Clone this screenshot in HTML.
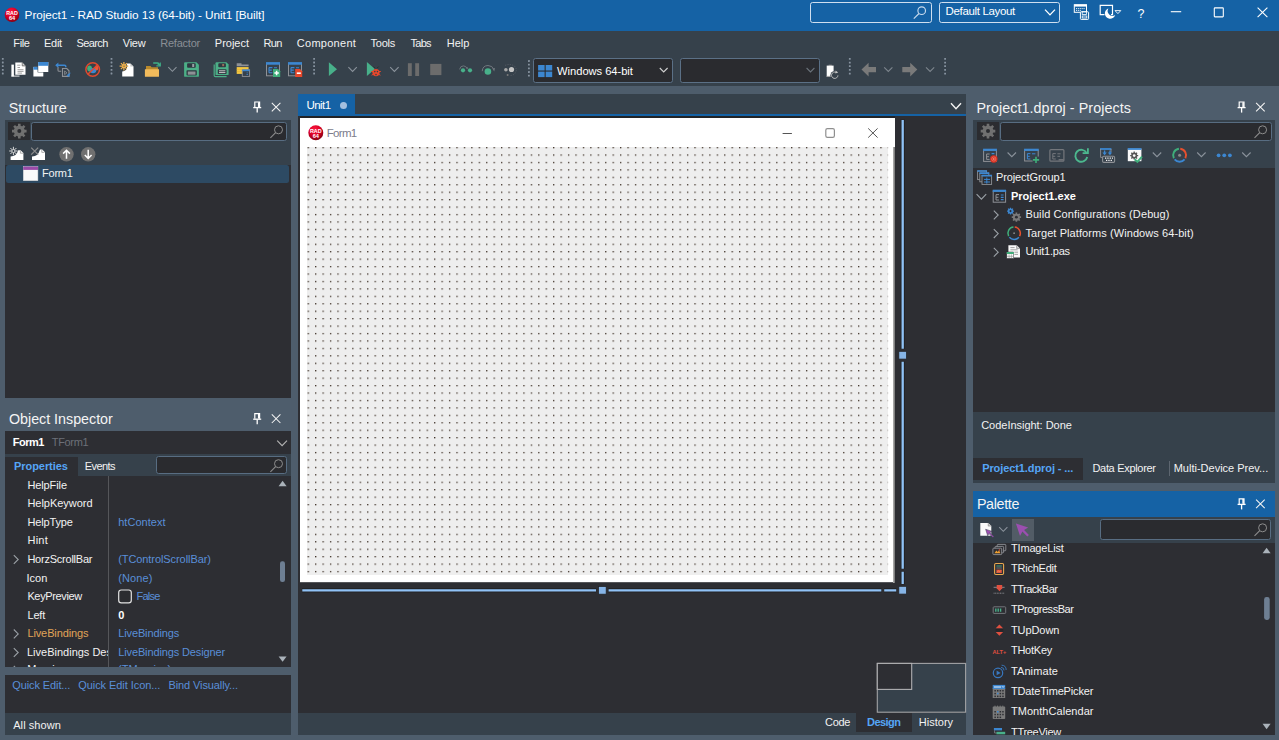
<!DOCTYPE html>
<html><head><meta charset="utf-8"><title>RAD Studio</title>
<style>
*{box-sizing:border-box;margin:0;padding:0}
html{background:#4e5d6c}html,body{width:1279px;height:740px;overflow:hidden;background:#4e5d6c;font-family:"Liberation Sans",sans-serif;font-size:11px;color:#f0f0f0}
.a{position:absolute}
.t{position:absolute;white-space:nowrap;line-height:1;font-size:11px;color:#f2f2f2}
.b{font-weight:bold}
.dk{background:#2d2e33}
.tb{background:#36414b}
.hd{font-size:14.3px;color:#f4f4f4}
.blue{color:#5a8fd8}
.sb{position:absolute;border:1px solid #586d82;border-radius:2.6px;background:#2a2b2f}
svg{position:absolute;overflow:visible}
</style></head><body>
<!-- BASES -->
<div class="a tb" style="left:0;top:0;width:1279px;height:86px"></div>
<div class="a dk" style="left:298.4px;top:94px;width:667.4px;height:640.5px"></div>
<div class="a tb" style="left:973.3px;top:490.8px;width:301.5px;height:243.7px"></div>
<!-- TITLE BAR -->
<div class="a" id="title" style="left:0;top:0;width:1279px;height:30.7px;background:#1562a5"></div>
<div class="t" style="left:24.6px;top:9.5px;font-size:11.8px;color:#fff;letter-spacing:-0.068px">Project1 - RAD Studio 13 (64-bit) - Unit1 [Built]</div>
<div class="a" style="left:810.3px;top:1.9px;width:121.6px;height:21px;border:1.7px solid #cfdff0;border-radius:2.6px"></div>
<div class="a" style="left:938.9px;top:1.9px;width:121px;height:21px;border:1.7px solid #cfdff0;border-radius:2.6px"></div>
<div class="t" style="left:945.6px;top:5.8px;font-size:11.5px;color:#fff;letter-spacing:-0.343px">Default Layout</div>
<svg id="titleicons" style="left:0;top:0" width="1279" height="31" viewBox="0 0 1279 31">
<defs><radialGradient id="rg" cx="0.42" cy="0.3" r="0.75"><stop offset="0" stop-color="#ff1840"/><stop offset="0.5" stop-color="#dc0026"/><stop offset="1" stop-color="#7a0010"/></radialGradient></defs>
<circle cx="12" cy="14.8" r="7.3" fill="url(#rg)"/>
<text x="12" y="14.6" font-family="Liberation Sans" font-weight="bold" font-size="6" fill="#fff" text-anchor="middle" textLength="11.4" lengthAdjust="spacingAndGlyphs">RAD</text>
<text x="12" y="20" font-family="Liberation Sans" font-weight="bold" font-size="5.6" fill="#fff" text-anchor="middle">64</text>
<!-- search magnifier -->
<g fill="none" stroke="#c9dbee" stroke-width="1.15"><circle cx="921.7" cy="10.7" r="3.8"/><path d="M919 13.5L913.8 18.6"/></g>
<!-- combo chevron -->
<path d="M1045 9.6L1050 14.9L1055 9.6" fill="none" stroke="#fff" stroke-width="1.3"/>
<!-- save layout -->
<g fill="none" stroke="#fff" stroke-width="1">
<rect x="1074.3" y="4.7" width="12.2" height="7.6" fill="#1562a5"/>
<path d="M1074.3 5.6H1086.5" stroke-width="2"/>
<path d="M1076 8.6H1085M1076 10.4H1081" stroke-dasharray="1.2 0.9" stroke-width="0.9"/>
<rect x="1080.4" y="11.8" width="8.2" height="7.6" rx="0.8" fill="#1562a5"/>
<rect x="1082.2" y="11.8" width="4.4" height="2.6" stroke-width="0.8"/>
<rect x="1082.2" y="16" width="4.6" height="2" stroke-width="0.8"/>
</g>
<!-- dark mode -->
<g fill="none" stroke="#fff" stroke-width="1.2">
<path d="M1104.5 14.6H1100.2V5.3H1112.5V14.6H1111"/>
<path d="M1108.37 8.43A5.3 5.3 0 1 0 1115.24 15.02A4.9 4.9 0 0 1 1108.37 8.43Z" fill="#fff" stroke="none"/>
<path d="M1115 10.6H1120.8L1117.9 13.6Z" stroke-width="0.9"/>
</g>
<text x="1141" y="17.6" font-family="Liberation Sans" font-size="12.5" fill="#fff" text-anchor="middle">?</text>
<!-- window controls -->
<g fill="none" stroke="#fff" stroke-width="1.1">
<path d="M1170.8 11.7H1181.2"/>
<rect x="1214.3" y="7.9" width="9" height="9" rx="0.6"/>
<path d="M1257.6 7.6L1267.4 17.2M1267.4 7.6L1257.6 17.2"/>
</g>
</svg>
<!-- MENU + TOOLBAR -->
<div id="menu">
<div class="t" style="left:13.3px;top:38.2px;letter-spacing:-0.369px">File</div>
<div class="t" style="left:43.9px;top:38.2px;letter-spacing:-0.233px">Edit</div>
<div class="t" style="left:76.6px;top:38.2px;letter-spacing:-0.627px">Search</div>
<div class="t" style="left:122.7px;top:38.2px;letter-spacing:-0.2px">View</div>
<div class="t" style="left:160.2px;top:38.2px;color:#8a8f96;letter-spacing:-0.216px">Refactor</div>
<div class="t" style="left:214.8px;top:38.2px">Project</div>
<div class="t" style="left:263.6px;top:38.2px;letter-spacing:-0.681px">Run</div>
<div class="t" style="left:296.8px;top:38.2px;letter-spacing:0.273px">Component</div>
<div class="t" style="left:370.6px;top:38.2px;letter-spacing:-0.245px">Tools</div>
<div class="t" style="left:410.5px;top:38.2px;letter-spacing:-0.712px">Tabs</div>
<div class="t" style="left:446.7px;top:38.2px">Help</div>
</div>
<div class="sb" style="left:533.1px;top:58.4px;width:139.7px;height:24.3px;border-width:1.3px;border-color:#5b7086"></div>
<div class="t" style="left:557.1px;top:65.5px;font-size:11.2px;color:#fff;letter-spacing:-0.051px">Windows 64-bit</div>
<div class="sb" style="left:680.2px;top:58.4px;width:139.7px;height:24.3px;border-width:1.3px;border-color:#5b7086"></div>

<svg id="tbicons" style="left:0;top:54px" width="1279" height="34" viewBox="0 54 1279 34">
<g fill="#8793a0"><rect x="1.9" y="57.9" width="1.8" height="1.8" rx="0.3"/><rect x="1.9" y="61.6" width="1.8" height="1.8" rx="0.3"/><rect x="1.9" y="65.2" width="1.8" height="1.8" rx="0.3"/><rect x="1.9" y="68.9" width="1.8" height="1.8" rx="0.3"/><rect x="1.9" y="72.6" width="1.8" height="1.8" rx="0.3"/><rect x="110.6" y="57.9" width="1.8" height="1.8" rx="0.3"/><rect x="110.6" y="61.6" width="1.8" height="1.8" rx="0.3"/><rect x="110.6" y="65.2" width="1.8" height="1.8" rx="0.3"/><rect x="110.6" y="68.9" width="1.8" height="1.8" rx="0.3"/><rect x="110.6" y="72.6" width="1.8" height="1.8" rx="0.3"/><rect x="313.2" y="57.9" width="1.8" height="1.8" rx="0.3"/><rect x="313.2" y="61.6" width="1.8" height="1.8" rx="0.3"/><rect x="313.2" y="65.2" width="1.8" height="1.8" rx="0.3"/><rect x="313.2" y="68.9" width="1.8" height="1.8" rx="0.3"/><rect x="313.2" y="72.6" width="1.8" height="1.8" rx="0.3"/><rect x="528.0" y="60.1" width="1.8" height="1.8" rx="0.3"/><rect x="528.0" y="63.8" width="1.8" height="1.8" rx="0.3"/><rect x="528.0" y="67.4" width="1.8" height="1.8" rx="0.3"/><rect x="528.0" y="71.1" width="1.8" height="1.8" rx="0.3"/><rect x="528.0" y="74.8" width="1.8" height="1.8" rx="0.3"/><rect x="848.9" y="58.0" width="1.8" height="1.8" rx="0.3"/><rect x="848.9" y="61.7" width="1.8" height="1.8" rx="0.3"/><rect x="848.9" y="65.3" width="1.8" height="1.8" rx="0.3"/><rect x="848.9" y="69.0" width="1.8" height="1.8" rx="0.3"/><rect x="848.9" y="72.7" width="1.8" height="1.8" rx="0.3"/><rect x="944.2" y="58.0" width="1.8" height="1.8" rx="0.3"/><rect x="944.2" y="61.7" width="1.8" height="1.8" rx="0.3"/><rect x="944.2" y="65.3" width="1.8" height="1.8" rx="0.3"/><rect x="944.2" y="69.0" width="1.8" height="1.8" rx="0.3"/><rect x="944.2" y="72.7" width="1.8" height="1.8" rx="0.3"/></g>
<!-- 1 view unit -->
<path d="M11.4 64.6H13.9V76.4H11.4Z" fill="#fff"/><path d="M11.4 76.1H19.5" stroke="#fff" stroke-width="0.9"/>
<path d="M15.3 62.6H22.2L25.5 65.9V74.8H15.3Z" fill="#fff"/><path d="M22.2 62.6V65.9H25.5" fill="#d0d0d0" stroke="#555" stroke-width="0.7"/>
<path d="M17.2 65.2H20.4M17.5 67.5H20M17.5 69.7H23.5M17.5 71.4H23.5M17.5 73.1H22" stroke="#8a8a8a" stroke-width="0.8"/>
<!-- 2 view form -->
<rect x="33.4" y="66.9" width="9.9" height="9.6" fill="#fff"/><rect x="33.4" y="66.9" width="4.6" height="2.8" fill="#3c87d1"/>
<rect x="37.6" y="61.6" width="11.1" height="10.8" fill="#36414b"/>
<rect x="38.2" y="62" width="10.1" height="10" fill="#fff"/><rect x="38.2" y="62" width="10.1" height="3.8" fill="#3c87d1"/>
<!-- 3 toggle -->
<g fill="none" stroke="#3c87d1" stroke-width="1.5"><path d="M56.2 65.2H64.5Q65.8 65.2 65.8 66.6V67.2"/></g>
<path d="M55.2 65.2L58.4 62.4V68Z" fill="#3c87d1"/>
<g fill="none" stroke="#8e9196" stroke-width="1.1"><path d="M58 67.3V70.2Q58 71.3 59.2 71.3H61.2"/><path d="M62.5 68.5H66.8L69 70.8V76.4H62.5Z"/><path d="M64.6 71L67 72.8L64.6 74.6Z" stroke-width="0.8"/></g>
<path d="M70.6 72.6L66.4 75.2L69 77Z" fill="#3c87d1"/>
<!-- 4 no-entry -->
<ellipse cx="89.6" cy="68.5" rx="2.4" ry="3" fill="#3fae7a"/><ellipse cx="93" cy="70.6" rx="3.2" ry="2.6" fill="#3c87d1"/><ellipse cx="96.6" cy="68" rx="1.8" ry="2.4" fill="#e8583a"/>
<g fill="none" stroke="#e04a2f" stroke-width="1.5"><circle cx="92.7" cy="69.5" r="6.8"/><path d="M97.6 64.7L87.8 74.3"/></g>
<!-- 5 new -->
<path d="M126.6 63.4H130.3L133.5 66.6V76.4H122.2V71.5Q126.8 71 127.4 66Z" fill="#fff"/>
<path d="M130.3 63.4V66.6H133.5" fill="#c8c8c8"/>
<g stroke="#f0b350" stroke-width="1.2"><path d="M123.9 61.9V70.5M119.6 66.2H128.2M120.9 63.2L126.9 69.2M126.9 63.2L120.9 69.2"/></g><circle cx="123.9" cy="66.2" r="2" fill="#f0b350"/><path d="M122.8 66.2H125" stroke="#8a6a30" stroke-width="0.8"/>
<!-- 6 open -->
<path d="M146 66H150.5L151.6 67.2H158V70H146Z" fill="#b8892c"/>
<path d="M144.9 69.2H159V76.2Q159 76.8 158.4 76.8H145.5Q144.9 76.8 144.9 76.2Z" fill="#f2bb5c"/>
<g fill="none" stroke="#3fae87" stroke-width="1.4"><path d="M153.2 63H157.6Q159 63 159 64.6"/></g><path d="M156.5 63.8H160.4V66.2Z" fill="#3fae87"/><path d="M156.4 65.9L160.3 65.9L160.3 62.5" fill="none" stroke="#3fae87" stroke-width="1.1"/>
<path d="M168.3 67.2L172.4 71.3L176.5 67.2" fill="none" stroke="#8a929b" stroke-width="1.1"/>
<!-- 7 save -->
<g id="floppy"><path d="M185 62.3H196.4L198.9 64.8V75.9Q198.9 76.8 198 76.8H185Q184.1 76.8 184.1 75.9V63.2Q184.1 62.3 185 62.3Z" fill="#4caf87"/>
<rect x="187.1" y="63.3" width="8.6" height="4.4" rx="0.8" fill="#2f3841"/><rect x="192.2" y="64" width="2" height="3" fill="#9aa0a6"/>
<rect x="186.5" y="70.3" width="10.3" height="5.2" rx="0.8" fill="#2f3841"/><rect x="187.8" y="71.5" width="7.7" height="3.2" fill="#8e9196"/></g>
<!-- 8 save all -->
<path d="M214.2 64.6V75.4Q214.2 76.6 215.4 76.6H226.6" fill="none" stroke="#4caf87" stroke-width="1.2"/>
<path d="M216.4 62.3H226.4L228.6 64.5V74.2Q228.6 75.1 227.7 75.1H216.4Q215.5 75.1 215.5 74.2V63.2Q215.5 62.3 216.4 62.3Z" fill="#4caf87"/>
<rect x="218.3" y="63.2" width="7.6" height="4" rx="0.8" fill="#2f3841"/><rect x="222.2" y="64" width="1.9" height="2.2" fill="#9a6a5a"/>
<rect x="217.8" y="69.3" width="8.8" height="4.8" rx="0.8" fill="#2f3841"/><path d="M219 70.8H225.4M219 72.6H225.4" stroke="#c8c8c8" stroke-width="1"/>
<!-- 9 open project -->
<path d="M236.7 63.2H241.5V64.6H248.6V66.3H236.7Z" fill="#8e9196"/>
<rect x="236.7" y="67.1" width="11.9" height="6.8" fill="#f4c842"/><path d="M236.7 69.4H248.6M236.7 71.6H243" stroke="#d8a830" stroke-width="0.5"/>
<rect x="242.3" y="69.8" width="7.3" height="6.6" fill="#36414b" stroke="#8e9196" stroke-width="0.9"/><path d="M242.3 70.4H249.6" stroke="#3c87d1" stroke-width="1.6"/><path d="M247.2 72.4V75" stroke="#3c87d1" stroke-width="1.2" stroke-dasharray="0.9 0.8"/>
<!-- 10 add file / 11 remove file -->
<g id="winE"><rect x="266.5" y="63.6" width="13" height="12.2" fill="none" stroke="#8e9196" stroke-width="1"/><path d="M266 63.4H280" stroke="#3c87d1" stroke-width="2.6"/>
<path d="M269 67.6H272.4M269 70.1H271.8M269 72.8H272.4M269 67.6V72.8M274 67.8H277M274 70.4H276" stroke="#3c87d1" stroke-width="1.1" fill="none"/></g>
<path d="M273 69H278L280.2 71.2V77H273Z" fill="#3fae7a"/><path d="M276.6 70.8V75.2M274.4 73H278.8" stroke="#fff" stroke-width="1.5"/>
<use href="#winE" x="22"/>
<path d="M295.2 69H300L302.2 71.2V77H295.2Z" fill="#e8482b"/><path d="M296.8 73.2H300.8" stroke="#fff" stroke-width="1.6"/>
<!-- run -->
<path d="M328.9 62.3L337 69.2L328.9 76Z" fill="#48b08a"/>
<path d="M348.4 67.2L352.6 71.4L356.8 67.2" fill="none" stroke="#8a929b" stroke-width="1.1"/>
<path d="M366.9 62L374.9 69L366.9 76Z" fill="#48b08a"/>
<path d="M373.6 66.8L375 68.2M378.6 66.6L377.2 68" stroke="#2a2a2a" stroke-width="0.9"/>
<circle cx="376" cy="72.6" r="3.6" fill="#e8482b"/><path d="M371.2 71.5H373M379 71.5H380.8M371.6 75.2L373 74.4M380.4 75.2L379 74.4" stroke="#e8482b" stroke-width="1"/><circle cx="374.8" cy="71.6" r="0.8" fill="#36414b"/><circle cx="377.4" cy="71.6" r="0.8" fill="#36414b"/><circle cx="376" cy="74.6" r="0.8" fill="#36414b"/>
<path d="M390.2 67.2L394.4 71.4L398.6 67.2" fill="none" stroke="#8a929b" stroke-width="1.1"/>
<rect x="407.9" y="63.2" width="3.9" height="12.8" fill="#6c6c6c"/><rect x="415.2" y="63.2" width="3.9" height="12.8" fill="#6c6c6c"/>
<rect x="430.2" y="63.9" width="11.2" height="11.2" fill="#6c6c6c"/>
<!-- step over -->
<circle cx="463" cy="70.3" r="2.1" fill="#48b08a"/><circle cx="470" cy="70.3" r="2.1" fill="#48b08a"/>
<path d="M459.6 69.4Q460.2 65.9 463.4 65.9Q466.2 65.9 467 68.6" fill="none" stroke="#70787f" stroke-width="0.9"/><path d="M465.8 67.6L467.4 69.6L468 67.2Z" fill="#70787f"/>
<!-- trace into -->
<circle cx="487.9" cy="71.5" r="3.3" fill="#48b08a"/>
<path d="M482.2 71.2Q482.6 65.6 488 65.5Q492.6 65.6 493.8 69.6" fill="none" stroke="#70787f" stroke-width="1"/><path d="M492.4 68.4L494.2 71.4L495 68Z" fill="#70787f"/>
<!-- run until return -->
<circle cx="505.9" cy="69.8" r="1.8" fill="#a8a8a8"/><circle cx="511.5" cy="69.5" r="2.6" fill="#c4c4c4"/><circle cx="507.6" cy="75.1" r="1" fill="#7a7a7a"/>
<path d="M505 65.4Q510.5 63.2 514.6 66.2Q517.6 69.4 515.2 73.2Q513 75.8 509.4 75.4" fill="none" stroke="#5a6068" stroke-width="0.8" stroke-dasharray="1.2 1.2"/>
<!-- windows logo -->
<g fill="#3c87d1"><rect x="538.1" y="65" width="6.5" height="5.5"/><rect x="545.7" y="65" width="6.5" height="5.5"/><rect x="538.1" y="71.6" width="6.5" height="5.5"/><rect x="545.7" y="71.6" width="6.5" height="5.5"/></g>
<path d="M659.8 68L663.7 72L667.6 68" fill="none" stroke="#d0d0d0" stroke-width="1.1"/>
<path d="M806.6 68L810.5 72L814.4 68" fill="none" stroke="#6a727a" stroke-width="1.1"/>
<!-- device refresh -->
<path d="M826.7 65.6H833.6V76.8H826.7Z" fill="#fdfdfd"/><path d="M828.6 64.8H831.8V65.8H828.6Z" fill="#b0b0b0"/><path d="M826.7 76.4H833.6" stroke="#9a9a9a" stroke-width="0.9"/>
<circle cx="834.7" cy="75.2" r="4.3" fill="#36414b"/><path d="M837.9 75.4A3.2 3.2 0 1 1 836.2 72.4" fill="none" stroke="#c4c4c4" stroke-width="0.9"/><path d="M835.6 70.6L838.2 72.4L835.4 73.6Z" fill="#c4c4c4"/>
<!-- back / forward -->
<path d="M861.5 69.6L868.6 62.8V67H876V72.2H868.6V76.4Z" fill="#7a7a7a"/>
<path d="M884.2 67.4L888.3 71.5L892.4 67.4" fill="none" stroke="#7d858d" stroke-width="1.1"/>
<path d="M917.3 69.6L910.2 62.8V67H902.3V72.2H910.2V76.4Z" fill="#7a7a7a"/>
<path d="M926 67.4L930.1 71.5L934.2 67.4" fill="none" stroke="#7d858d" stroke-width="1.1"/>
</svg>
<!-- STRUCTURE PANEL -->
<div class="t hd" style="left:8.7px;top:100.6px">Structure</div>
<div class="a tb" style="left:5px;top:120px;width:286px;height:45px"></div>
<div class="a dk" style="left:5px;top:164.5px;width:286px;height:233px"></div>
<div class="a" style="left:8.1px;top:122px;width:22.4px;height:18.1px;background:#2b2c30"></div>
<div class="sb" style="left:31.3px;top:121.7px;width:255.6px;height:19px;border-width:1.5px"></div>
<div class="a" style="left:6.3px;top:164.6px;width:282.7px;height:18.2px;background:#2d4a63;border-radius:2.5px"></div>
<div class="t" style="left:42.1px;top:168.3px;letter-spacing:-0.241px">Form1</div>

<svg id="symdefs" style="left:0;top:0" width="0" height="0"><defs>
<g id="pin"><path d="M-2.4 5.6V0.4H2.4V5.6" fill="none" stroke="#fff" stroke-width="1.2"/><path d="M1.5 0.6V5.4" stroke="#fff" stroke-width="1.5"/><path d="M-4 6H4" stroke="#fff" stroke-width="1.3"/><path d="M0 6.4V11" stroke="#fff" stroke-width="1.3"/></g>
<g id="cls"><path d="M-4.3 -4.3L4.3 4.3M4.3 -4.3L-4.3 4.3" stroke="#f4f4f4" stroke-width="1.05" fill="none"/></g>
<g id="mag"><circle cx="0" cy="0" r="4" fill="none" stroke="#8d8d8d" stroke-width="1"/><path d="M-2.9 2.9L-8.1 8.1" stroke="#8d8d8d" stroke-width="1.1"/></g>
<g id="gear"><circle cx="0" cy="0" r="4" fill="none" stroke="#707070" stroke-width="3"/><path d="M0 -7.3V7.3M-7.3 0H7.3M-5.2 -5.2L5.2 5.2M5.2 -5.2L-5.2 5.2" stroke="#707070" stroke-width="2.6"/><circle cx="0" cy="0" r="2" fill="#2b2c30"/></g>
<g id="chr"><path d="M-2.2 -4.4L2.2 0L-2.2 4.4" fill="none" stroke="#9aa0a6" stroke-width="1.1"/></g>
<g id="chd"><path d="M-4.4 -2.2L0 2.2L4.4 -2.2" fill="none" stroke="#9aa0a6" stroke-width="1.1"/></g>
</defs></svg>
<svg id="structicons" style="left:0;top:94px" width="296" height="100" viewBox="0 94 296 100">
<use href="#pin" x="257.2" y="101.6"/><use href="#cls" x="276.1" y="107.1"/>
<use href="#gear" x="19.3" y="131.1"/><use href="#mag" x="278.5" y="129.8"/>
<!-- new -->
<path d="M18.2 150.2H20.6L23.4 153V159.9H10.6V156.4Q16.4 156.4 18.2 150.2Z" fill="#fff"/><path d="M20.4 150.4V153.2H23.2" fill="none" stroke="#999" stroke-width="0.8"/>
<g stroke="#e8e8e8" stroke-width="0.9"><path d="M13.4 146.8V155.2M9.2 151H17.6M10.4 148L16.4 154M16.4 148L10.4 154"/></g><circle cx="13.4" cy="151" r="1.5" fill="#36414b" stroke="#e8e8e8" stroke-width="0.7"/>
<!-- delete -->
<path d="M40 149.4H42.2L45 152.2V159.9H32V156.4Q38 156.6 40 149.4Z" fill="#fff"/><path d="M41.8 149.8V152.4H44.6" fill="none" stroke="#999" stroke-width="0.8"/>
<path d="M31.2 147.6L38.2 154.6M38.2 147.6L31.2 154.6" stroke="#8a8a8a" stroke-width="1.3"/>
<!-- up/down -->
<circle cx="66.5" cy="154.3" r="7.2" fill="#707070"/><path d="M66.5 158.8V150.6M63.1 153.6L66.5 150.2L69.9 153.6" fill="none" stroke="#fff" stroke-width="1.5"/>
<circle cx="88.2" cy="154.3" r="7.2" fill="#707070"/><path d="M88.2 149.8V158M84.8 155L88.2 158.4L91.6 155" fill="none" stroke="#fff" stroke-width="1.5"/>
<!-- form icon -->
<rect x="23.3" y="166.7" width="14.6" height="14" fill="#fafafa" stroke="#d8d8d8" stroke-width="0.5"/><rect x="23.2" y="166.6" width="14.8" height="3.3" fill="#9a4aa8"/>
</svg>
<!-- OBJECT INSPECTOR -->
<div class="t hd" style="left:8.95px;top:412.2px;letter-spacing:-0.016px">Object Inspector</div>
<div class="a dk" style="left:5px;top:431.2px;width:286px;height:235.8px"></div>
<div class="a tb" style="left:5px;top:453.6px;width:286px;height:22.2px"></div>
<div class="a dk" style="left:5px;top:457.3px;width:73px;height:18.7px"></div>
<div class="t b" style="left:12.7px;top:436.8px;color:#fff;letter-spacing:-0.475px">Form1</div>
<div class="t" style="left:51.8px;top:436.8px;color:#6c7078;letter-spacing:-0.336px">TForm1</div>
<div class="t b" style="left:14.0px;top:461px;color:#55a5f6;letter-spacing:-0.055px">Properties</div>
<div class="t" style="left:84.7px;top:461px;letter-spacing:-0.546px">Events</div>
<div class="sb" style="left:156.2px;top:455.6px;width:130.8px;height:18.4px;border-width:1.3px"></div>
<div class="a" style="left:107.9px;top:475.8px;width:1.1px;height:191.5px;background:#55565a"></div>
<div id="props">
<div class="t" style="left:27.4px;top:479.5px;letter-spacing:-0.104px">HelpFile</div>
<div class="t" style="left:27.4px;top:498.2px;letter-spacing:-0.03px">HelpKeyword</div>
<div class="t" style="left:27.4px;top:516.8px;letter-spacing:-0.136px">HelpType</div>
<div class="t blue" style="left:118.2px;top:516.8px;letter-spacing:0.04px">htContext</div>
<div class="t" style="left:27.4px;top:535.4px;letter-spacing:0.298px">Hint</div>
<div class="t" style="left:27.4px;top:554px;letter-spacing:-0.232px">HorzScrollBar</div>
<div class="t blue" style="left:118.2px;top:554px;letter-spacing:-0.076px">(TControlScrollBar)</div>
<div class="t" style="left:26.4px;top:572.6px;letter-spacing:0.075px">Icon</div>
<div class="t blue" style="left:118.2px;top:572.6px;letter-spacing:0.128px">(None)</div>
<div class="t" style="left:27.4px;top:591.2px;letter-spacing:-0.359px">KeyPreview</div>
<div class="t blue" style="left:136.45px;top:591.2px;letter-spacing:-0.733px">False</div>
<div class="t" style="left:27.4px;top:609.8px;letter-spacing:-0.131px">Left</div>
<div class="t b" style="left:118.2px;top:609.8px;color:#fff">0</div>
<div class="t" style="left:27.4px;top:628.4px;color:#e0a458;letter-spacing:-0.111px">LiveBindings</div>
<div class="t blue" style="left:118.2px;top:628.4px;letter-spacing:-0.116px">LiveBindings</div>
<div class="a" style="left:27px;top:640px;width:80.5px;height:20px;overflow:hidden"><div class="t" style="left:0;top:7px">LiveBindings Designer</div></div>
<div class="t blue" style="left:118.2px;top:647px;letter-spacing:-0.122px">LiveBindings Designer</div>
</div>
<div class="a dk" style="left:5px;top:674.5px;width:286px;height:60px"></div>
<div class="t blue" style="left:12.2px;top:680.3px;letter-spacing:-0.095px">Quick Edit...</div>
<div class="t blue" style="left:78.2px;top:680.3px;letter-spacing:-0.058px">Quick Edit Icon...</div>
<div class="t blue" style="left:168.45px;top:680.3px;letter-spacing:-0.098px">Bind Visually...</div>
<div class="a tb" style="left:5px;top:712.5px;width:286px;height:22px"></div>
<div class="t" style="left:13.2px;top:719.5px;letter-spacing:0.08px">All shown</div>

<svg id="oiicons" style="left:0;top:404px" width="296" height="336" viewBox="0 404 296 336">
<use href="#pin" x="257.2" y="413.2"/><use href="#cls" x="276.1" y="418.7"/>
<path d="M277.2 440.6L282.1 445.6L287 440.6" fill="none" stroke="#b4b4b4" stroke-width="1.1"/>
<use href="#mag" x="278.5" y="463.7"/>
<path d="M278.6 486.2L282.6 480.8L286.6 486.2Z" fill="#aab2ba"/>
<path d="M278.6 656.4L282.6 661.8L286.6 656.4Z" fill="#aab2ba"/>
<rect x="280" y="561.2" width="5" height="20.8" rx="2.2" fill="#6e7f93"/>
<use href="#chr" x="16" y="559.5"/><use href="#chr" x="16" y="633.9"/><use href="#chr" x="16" y="652.5"/>
<rect x="118.7" y="590" width="12.6" height="12.8" rx="2.6" fill="#2b2c30" stroke="#e2e2e2" stroke-width="1.2"/>
</svg>
<div class="a" style="left:5px;top:660px;width:286px;height:7.3px;overflow:hidden"><svg style="left:0;top:0" width="30" height="12" viewBox="0 0 30 12"><use href="#chr" x="11" y="10.4"/></svg><div class="t" style="left:22.2px;top:4.2px">Margins</div><div class="t blue" style="left:113px;top:4.2px">(TMargins)</div></div>
<!-- CENTER -->
<div class="a tb" style="left:298.4px;top:94px;width:667.4px;height:20px"></div>
<div class="a" style="left:298.4px;top:94px;width:56.7px;height:20.2px;background:#1562a5"></div>
<div class="a" style="left:298.4px;top:114px;width:667.4px;height:2.2px;background:#1562a5"></div>
<div class="t" style="left:306.5px;top:99.8px;font-size:11.5px;color:#fff;letter-spacing:-0.563px">Unit1</div>
<div class="a" style="left:340px;top:101.8px;width:7px;height:7px;border-radius:50%;background:#a3bfdf"></div>
<div class="a tb" style="left:298.4px;top:712.5px;width:667.4px;height:22px"></div>
<!-- form -->
<div class="a" style="left:300.2px;top:116.3px;width:595px;height:2px;background:#222326"></div>
<div class="a" style="left:300.2px;top:118.2px;width:594.9px;height:464px;background:#fff"></div>
<div class="a" style="left:300.2px;top:582.2px;width:595px;height:1.2px;background:#55565a"></div>
<div class="a" style="left:893.2px;top:146.6px;width:2px;height:436.6px;background:linear-gradient(90deg,#b8b8b8,#6d6d6d)"></div>
<div class="a" style="left:306.6px;top:146.7px;width:581.1px;height:428.5px;background:#eeeeee"></div>
<svg style="left:306.6px;top:146.7px" width="581.1" height="428.5" viewBox="0 0 581.1 428.5">
<defs><pattern id="gd" x="0.6" y="-0.05" width="7.438" height="7.438" patternUnits="userSpaceOnUse"><rect x="0" y="0" width="1.3" height="1.3" fill="#3e3026"/></pattern></defs>
<rect x="0" y="0" width="581.1" height="428.5" fill="url(#gd)"/>
</svg>
<div class="t" style="left:326.8px;top:128.4px;color:#7c7c8c;font-size:11.5px;letter-spacing:-0.707px">Form1</div>
<!-- form window buttons + selection lines -->
<svg style="left:0;top:0" width="1279" height="740" viewBox="0 0 1279 740">
<g fill="none" stroke="#777" stroke-width="1">
<path d="M782.6 133.5H791.9" stroke="#555"/>
<rect x="825.8" y="128.7" width="8.6" height="8.6" rx="1.6" stroke="#8f8f8f" stroke-width="1.2"/>
<path d="M868.2 128.4L877.6 137.6M877.6 128.4L868.2 137.6" stroke="#555"/>
</g>
<!-- selection outline -->
<g stroke="#222326" stroke-width="4.4" fill="none">
<path d="M902.7 119.5V349M902.7 361.5V569M902.7 571.5V584.5"/>
<path d="M302 590.3H596.2M608.4 590.3H881.5M884 590.3H896.4"/>
</g>
<g stroke="#90c2f6" stroke-width="2.3" fill="none">
<path d="M902.7 120V348.8M902.7 361.7V568.8M902.7 571.7V584"/>
<path d="M302.3 590.3H596M608.6 590.3H881.3M884.2 590.3H896.2"/>
</g>
<g fill="#86b4e6" stroke="#222326" stroke-width="0.8">
<rect x="898.8" y="351.3" width="7.8" height="7.8"/>
<rect x="898.8" y="586.3" width="7.8" height="7.8"/>
<rect x="598.4" y="586.4" width="7.8" height="7.8"/>
</g>
<circle cx="315.8" cy="132.7" r="7.5" fill="url(#rg)"/>
<text x="315.8" y="132.5" font-family="Liberation Sans" font-weight="bold" font-size="6" fill="#fff" text-anchor="middle" textLength="11.6" lengthAdjust="spacingAndGlyphs">RAD</text>
<text x="315.8" y="138" font-family="Liberation Sans" font-weight="bold" font-size="5.7" fill="#fff" text-anchor="middle">64</text>
<!-- tab chevron -->
<path d="M951 103.3L956 108.8L961 103.3" fill="none" stroke="#f4f4f4" stroke-width="1.4"/>
<!-- minimap -->
<rect x="877.3" y="663.4" width="88.3" height="48.8" fill="#36414b" stroke="#a2a3a5" stroke-width="1.1"/>
<rect x="877.3" y="663.4" width="34.4" height="26" fill="#2d2e33" stroke="#b0b0b2" stroke-width="1.1"/>
</svg>
<!-- bottom tabs -->
<div class="a dk" style="left:856.3px;top:712.5px;width:55.6px;height:19px"></div>
<div class="t" style="left:825.1px;top:717px;letter-spacing:-0.326px">Code</div>
<div class="t b" style="left:867.0px;top:717px;color:#55a5f6;letter-spacing:-0.551px">Design</div>
<div class="t" style="left:918.8px;top:717px;letter-spacing:0.013px">History</div>

<!-- PROJECTS PANEL -->
<div class="t hd" style="left:976.45px;top:100.6px;letter-spacing:0.081px">Project1.dproj - Projects</div>
<div class="a tb" style="left:973.3px;top:120px;width:301.5px;height:362.5px"></div>
<div class="a dk" style="left:973.3px;top:168.3px;width:301.5px;height:244.2px"></div>
<div class="a" style="left:976.9px;top:122px;width:22.3px;height:18.1px;background:#2b2c30"></div>
<div class="sb" style="left:1000px;top:121.7px;width:271.7px;height:19px;border-width:1.5px"></div>
<div class="t" style="left:995.95px;top:172px;letter-spacing:-0.101px">ProjectGroup1</div>
<div class="t b" style="left:1010.95px;top:190.6px;color:#fff;letter-spacing:0.014px">Project1.exe</div>
<div class="t" style="left:1025.45px;top:209.2px;letter-spacing:0.103px">Build Configurations (Debug)</div>
<div class="t" style="left:1025.45px;top:227.8px;letter-spacing:0.081px">Target Platforms (Windows 64-bit)</div>
<div class="t" style="left:1025.45px;top:246.4px;letter-spacing:-0.234px">Unit1.pas</div>

<div class="t" style="left:981.2px;top:420px;letter-spacing:-0.025px">CodeInsight: Done</div>
<div class="a dk" style="left:973.3px;top:457.5px;width:110.2px;height:22px"></div>
<div class="t b" style="left:982.2px;top:462.8px;color:#55a5f6;letter-spacing:-0.092px">Project1.dproj - ...</div>
<div class="t" style="left:1092.45px;top:462.8px;letter-spacing:-0.312px">Data Explorer</div>
<div class="a" style="left:1169px;top:461px;width:1px;height:14.5px;background:#5d6670"></div>
<div class="t" style="left:1173.7px;top:462.8px">Multi-Device Prev...</div>

<svg id="projicons" style="left:968px;top:94px" width="311" height="400" viewBox="968 94 311 400">
<use href="#pin" x="1241.6" y="101.6"/><use href="#cls" x="1260.4" y="107.1"/>
<use href="#gear" x="988" y="131.1"/><use href="#mag" x="1262.6" y="129.8"/>
<!-- A -->
<rect x="983.6" y="150" width="12.8" height="11.4" fill="none" stroke="#8e9196" stroke-width="1"/><path d="M983.1 149.8H996.9" stroke="#3c87d1" stroke-width="2.2"/>
<path d="M989.6 154H986.6V159.4H989.6M986.6 156.7H989" fill="none" stroke="#8e9196" stroke-width="1"/><path d="M991.6 153.6H994.4" stroke="#3c87d1" stroke-width="1.2"/>
<circle cx="993.8" cy="159" r="3.7" fill="#d83020"/><circle cx="993.8" cy="159" r="2.1" fill="none" stroke="#f08070" stroke-width="0.7"/><circle cx="993.8" cy="159" r="0.8" fill="#ffb0a0"/>
<path d="M1007.6 152.5L1011.8 156.7L1016 152.5" fill="none" stroke="#8a929b" stroke-width="1.1"/>
<!-- B -->
<rect x="1024.6" y="150" width="13.6" height="11" fill="none" stroke="#8e9196" stroke-width="1"/><path d="M1024.1 149.8H1038.7" stroke="#3c87d1" stroke-width="2.2"/>
<path d="M1030.4 153.6H1027.4V159H1030.4M1027.4 156.3H1029.8M1032 153.8H1035.4" fill="none" stroke="#3c87d1" stroke-width="1"/>
<path d="M1032.6 156.6H1039.4V163H1032.6Z" fill="#36414b"/><path d="M1036 156.8V163M1032.9 159.9H1039.1" stroke="#3fae7a" stroke-width="1.6"/>
<!-- C -->
<rect x="1049.9" y="149.6" width="14" height="11.6" rx="1" fill="none" stroke="#74777c" stroke-width="1.2"/><path d="M1055.8 153.6H1052.8V159H1055.8M1052.8 156.3H1055.2M1057.4 153.8H1060.6M1057.4 156.3H1060" fill="none" stroke="#74777c" stroke-width="1"/><path d="M1058.6 159.8H1063.6" stroke="#74777c" stroke-width="1.4"/>
<!-- D refresh -->
<path d="M1086.6 152.9A6 6 0 1 0 1087.2 157" fill="none" stroke="#4cb88e" stroke-width="1.9"/><path d="M1082.6 153.1H1087.9V148.2" fill="none" stroke="#4cb88e" stroke-width="1.8"/>
<!-- E -->
<path d="M1100 149H1111.4" stroke="#3c87d1" stroke-width="1.8"/><path d="M1100.6 149V157.4H1102.4" fill="none" stroke="#8e9196" stroke-width="0.9"/><path d="M1111 149V152" stroke="#8e9196" stroke-width="0.9"/>
<path d="M1104.6 150.6V153.4M1110 150.6V153.4" stroke="#3c87d1" stroke-width="1.4"/><path d="M1102.4 152.6H1106.8L1104.6 155.2ZM1107.8 152.6H1112.2L1110 155.2Z" fill="#3c87d1"/>
<rect x="1102.6" y="156.2" width="12" height="6.2" rx="1.2" fill="#36414b" stroke="#8e9196" stroke-width="1.1"/><path d="M1105 158.2H1113M1106 160.4H1112" stroke="#f4f4f4" stroke-width="1.2" stroke-dasharray="1.3 1"/>
<!-- F -->
<rect x="1127.8" y="148.6" width="13.6" height="12.6" fill="#fafafa"/><path d="M1127.8 149H1141.4" stroke="#3c87d1" stroke-width="1.8"/>
<g transform="translate(1134.2,155.6) scale(0.55)"><circle cx="0" cy="0" r="4" fill="none" stroke="#555" stroke-width="3"/><path d="M0 -7.3V7.3M-7.3 0H7.3M-5.2 -5.2L5.2 5.2M5.2 -5.2L-5.2 5.2" stroke="#555" stroke-width="2.4"/><circle cx="0" cy="0" r="2.4" fill="#fafafa"/></g>
<path d="M1134.6 159.2L1137.4 161.8L1142 156.6" fill="none" stroke="#3fae7a" stroke-width="2"/>
<path d="M1152.8 152.5L1157 156.7L1161.2 152.5" fill="none" stroke="#8a929b" stroke-width="1.1"/>
<!-- G ring -->
<g id="ring" fill="none" stroke-width="1.9"><path d="M1173.86 158.30A6.5 6.5 0 0 1 1178.92 148.79" stroke="#3fae7a"/><path d="M1180.28 148.79A6.5 6.5 0 0 1 1185.34 158.30" stroke="#e8502e"/><path d="M1184.58 159.43A6.5 6.5 0 0 1 1174.62 159.43" stroke="#3c87d1"/></g><circle cx="1179.6" cy="155.25" r="1.5" fill="#8a8a8a"/>
<path d="M1197.2 152.5L1201.4 156.7L1205.6 152.5" fill="none" stroke="#8a929b" stroke-width="1.1"/>
<g fill="#3c87d1"><circle cx="1218.6" cy="155.3" r="1.9"/><circle cx="1224.25" cy="155.3" r="1.9"/><circle cx="1229.9" cy="155.3" r="1.9"/></g>
<path d="M1242.2 152.5L1246.4 156.7L1250.6 152.5" fill="none" stroke="#8a929b" stroke-width="1.1"/>
<!-- tree icons -->
<g fill="#2d2e33" stroke="#8e9196" stroke-width="0.9"><rect x="977.6" y="171" width="9" height="8.6"/><rect x="979.8" y="173.2" width="9" height="8.6"/><rect x="982" y="175.4" width="9.6" height="9"/></g>
<path d="M977.2 171H987M979.4 173.2H989.2M981.6 175.6H992" stroke="#3c87d1" stroke-width="1.7"/>
<path d="M984 179.4H990M984 182H990M986.8 177.6V183.6" stroke="#3c87d1" stroke-width="1"/>
<path d="M976.6 194.2L981.4 199.2L986.2 194.2" fill="none" stroke="#9aa0a6" stroke-width="1.1"/>
<rect x="993.2" y="191" width="12.4" height="11.2" fill="none" stroke="#8e9196" stroke-width="1"/><path d="M992.7 190.8H1006.1" stroke="#3c87d1" stroke-width="2.2"/>
<path d="M999 194.6H996V200H999M996 197.3H998.4" fill="none" stroke="#8e9196" stroke-width="1"/><path d="M1000.8 195H1003.6M1000.8 197.3H1003.6M1000.8 199.6H1003.6" stroke="#3c87d1" stroke-width="1.2"/>
<use href="#chr" x="996" y="215"/><use href="#chr" x="996" y="233.6"/><use href="#chr" x="996" y="252.2"/>
<g transform="translate(1010.5,211.1) scale(0.47)"><circle cx="0" cy="0" r="4" fill="none" stroke="#3c87d1" stroke-width="3"/><path d="M0 -7.3V7.3M-7.3 0H7.3M-5.2 -5.2L5.2 5.2M5.2 -5.2L-5.2 5.2" stroke="#3c87d1" stroke-width="2.6"/><circle cx="0" cy="0" r="2.2" fill="#2d2e33"/></g>
<g transform="translate(1016.4,217.2) scale(0.64)"><circle cx="0" cy="0" r="4" fill="none" stroke="#7a7a7a" stroke-width="3"/><path d="M0 -7.3V7.3M-7.3 0H7.3M-5.2 -5.2L5.2 5.2M5.2 -5.2L-5.2 5.2" stroke="#7a7a7a" stroke-width="2.6"/><circle cx="0" cy="0" r="2.2" fill="#2d2e33"/></g>
<g fill="none" stroke-width="1.5"><path d="M1008.63 236.11A6.2 6.2 0 0 1 1013.45 227.03" stroke="#3fae7a"/><path d="M1014.75 227.03A6.2 6.2 0 0 1 1019.57 236.11" stroke="#e8502e"/><path d="M1018.85 237.19A6.2 6.2 0 0 1 1009.35 237.19" stroke="#3c87d1"/></g><circle cx="1014.1" cy="233.2" r="0.9" fill="#8a8a8a"/>
<path d="M1008.4 245.2H1016.6L1020 248.6V257.4H1008.4Z" fill="#fafafa"/><path d="M1016.6 245.2V248.6H1020" fill="#d0d0d0" stroke="#777" stroke-width="0.6"/>
<path d="M1010.4 247.6H1014.6M1010.4 249.8H1017.6M1014.4 252.2H1018M1014.4 254.4H1018" stroke="#8a8a8a" stroke-width="0.8"/>
<rect x="1006.8" y="252" width="6.9" height="6.4" fill="#fafafa" stroke="#2d2e33" stroke-width="0.5"/><rect x="1006.8" y="252" width="6.9" height="2" fill="#3fae7a"/><path d="M1009.1 254.4V258.2M1011.4 254.4V258.2M1007 256.3H1013.6" stroke="#8a8a8a" stroke-width="0.6"/>
</svg>
<!-- PALETTE -->
<div class="a" style="left:973.3px;top:490.8px;width:301.5px;height:26px;background:#1562a5"></div>
<div class="t hd" style="left:976.95px;top:497.4px;letter-spacing:-0.351px">Palette</div>
<div class="a dk" style="left:973.3px;top:542.5px;width:301.5px;height:192px"></div>
<div class="a" style="left:1012.1px;top:519px;width:21.9px;height:21.8px;background:#525c66"></div>
<div class="sb" style="left:1100px;top:519.2px;width:171.2px;height:21.3px;border-width:1.4px"></div>
<div id="pal">
<div class="t" style="left:1010.95px;top:542.8px;letter-spacing:-0.167px">TImageList</div>
<div class="t" style="left:1010.95px;top:563.2px;letter-spacing:-0.222px">TRichEdit</div>
<div class="t" style="left:1010.95px;top:583.7px;letter-spacing:-0.489px">TTrackBar</div>
<div class="t" style="left:1010.95px;top:604.2px;letter-spacing:-0.44px">TProgressBar</div>
<div class="t" style="left:1010.95px;top:624.6px;letter-spacing:-0.073px">TUpDown</div>
<div class="t" style="left:1010.95px;top:645px;letter-spacing:-0.24px">THotKey</div>
<div class="t" style="left:1010.95px;top:665.5px;letter-spacing:0.102px">TAnimate</div>
<div class="t" style="left:1010.95px;top:686px;letter-spacing:-0.146px">TDateTimePicker</div>
<div class="t" style="left:1010.95px;top:706.4px;letter-spacing:0.045px">TMonthCalendar</div>
<div class="a" style="left:1010.8px;top:722px;width:100px;height:12.5px;overflow:hidden"><div class="t" style="left:0.2px;top:4.8px;letter-spacing:-0.3px">TTreeView</div></div>
</div>
<svg id="palicons" style="left:968px;top:488px" width="311" height="247" viewBox="968 488 311 247">
<use href="#pin" x="1241.6" y="498.4"/><use href="#cls" x="1260.4" y="503.9"/>
<use href="#mag" x="1262.6" y="527.8"/>
<!-- page+arrow -->
<path d="M980.3 523H988.2L991.3 526.1V535.8H980.3Z" fill="#fafafa"/><path d="M988.2 523V526.1H991.3" fill="#c8c8c8" stroke="#777" stroke-width="0.5"/>
<path d="M985.6 529.2L992 531.4L989.9 532.6L993.9 536.6L992.9 537.6L988.9 533.6L987.7 535.8Z" fill="#9b4fb0" stroke="#36414b" stroke-width="0.5"/>
<path d="M999.2 527.2L1003.3 531.3L1007.4 527.2" fill="none" stroke="#8a929b" stroke-width="1.1"/>
<path d="M1015.9 523.4L1028.2 527.6L1024.1 530L1028.9 534.9L1027.3 536.5L1022.4 531.6L1020 535.9Z" fill="#9b4fb0"/>
<path d="M1262.6 553.2L1266.6 547.8L1270.6 553.2Z" fill="#aab2ba"/>
<path d="M1262.6 723.8L1266.6 729.2L1270.6 723.8Z" fill="#aab2ba"/>
<rect x="1264.1" y="597" width="5.6" height="23" rx="2.4" fill="#6e7f93"/>
<!-- TImageList -->
<g fill="#2d2e33" stroke="#8e9196" stroke-width="0.9"><rect x="997.2" y="544.4" width="8.6" height="6.4" rx="0.8"/><rect x="995" y="546.4" width="8.6" height="6.4" rx="0.8"/><rect x="992.9" y="548.2" width="8.8" height="6.4" rx="0.8"/></g>
<path d="M994.4 553.2L996.4 550.6L997.8 552L999 550.2L1000.4 553.2Z" fill="#f0a030"/><circle cx="999.4" cy="550" r="0.7" fill="#e05040"/>
<!-- TRichEdit -->
<rect x="994.6" y="563.5" width="9" height="11" rx="1.2" fill="#2d2e33" stroke="#e8a850" stroke-width="1.1"/><path d="M996.4 566H1001.8" stroke="#48b08a" stroke-width="0.9"/><path d="M996.4 568H1001.8" stroke="#8e9196" stroke-width="0.7"/><rect x="996.4" y="569.6" width="5.4" height="3.4" fill="#e05040"/><path d="M997 572.4L998.4 570.8L999.6 571.8L1001 570.4" stroke="#f0b350" stroke-width="0.6" fill="none"/>
<!-- TTrackBar -->
<path d="M993.6 587.3H1004.6" stroke="#8e9196" stroke-width="0.9"/><path d="M996.7 584.9H1002.2V588.2L999.45 591.2L996.7 588.2Z" fill="#e05040"/><path d="M993.6 593.2H1004.6" stroke="#8e9196" stroke-width="0.9" stroke-dasharray="1 0.6"/>
<!-- TProgressBar -->
<rect x="993.2" y="606.8" width="12.5" height="6.6" rx="0.8" fill="none" stroke="#74777c" stroke-width="1"/><path d="M995.8 608.6V611.8M998.2 608.6V611.8M1000.6 608.6V611.8" stroke="#48b08a" stroke-width="1.4"/>
<!-- TUpDown -->
<path d="M995.7 628.3L999.4 624.6L1003.1 628.3Z" fill="#e05040"/><path d="M995.7 632.1L999.4 635.8L1003.1 632.1Z" fill="#e05040"/><path d="M995.7 629.6H1003.1M995.7 631H1003.1" stroke="#1c1c1e" stroke-width="0.6"/>
<!-- THotKey -->
<text x="992.6" y="653.9" font-family="Liberation Sans" font-weight="bold" font-size="5.6" fill="#e05040" textLength="13.6" lengthAdjust="spacingAndGlyphs">ALT+</text>
<!-- TAnimate -->
<circle cx="998" cy="672.9" r="4.7" fill="none" stroke="#3878c0" stroke-width="1.2"/><path d="M996.6 670.6L1000.6 672.9L996.6 675.2Z" fill="#3878c0"/>
<path d="M1001 667.4Q1004 667.4 1004 670.4M1001.6 665.2Q1006.2 665.4 1006.2 670" fill="none" stroke="#3878c0" stroke-width="0.9"/>
<!-- TDateTimePicker -->
<rect x="992.7" y="688" width="12.5" height="10" fill="#7a7a7a"/><rect x="992.7" y="684.9" width="12.5" height="4" fill="#3c87d1"/><path d="M994 687H1001" stroke="#fff" stroke-width="0.9"/><path d="M1002 686.2L1003.1 687.4L1004.2 686.2" stroke="#fff" stroke-width="0.7" fill="none"/>
<g fill="#2d2e33"><rect x="994.4" y="690" width="1.5" height="1.5"/><rect x="997" y="690" width="1.5" height="1.5"/><rect x="999.6" y="690" width="1.5" height="1.5"/><rect x="1002.2" y="690" width="1.5" height="1.5"/><rect x="994.4" y="692.8" width="1.5" height="1.5"/><rect x="999.6" y="692.8" width="1.5" height="1.5"/><rect x="1002.2" y="692.8" width="1.5" height="1.5"/><rect x="994.4" y="695.6" width="1.5" height="1.5"/><rect x="997" y="695.6" width="1.5" height="1.5"/><rect x="999.6" y="695.6" width="1.5" height="1.5"/><rect x="1002.2" y="695.6" width="1.5" height="1.5"/></g><rect x="997" y="692.8" width="1.5" height="1.5" fill="#3c87d1"/>
<!-- TMonthCalendar -->
<rect x="992.7" y="706.6" width="12.5" height="12.4" rx="0.8" fill="#7a7a7a"/><path d="M995 705.6V707.6M997.6 705.6V707.6M1000.2 705.6V707.6M1002.8 705.6V707.6" stroke="#7a7a7a" stroke-width="1"/>
<g fill="#2d2e33"><rect x="994.4" y="711" width="1.5" height="1.5"/><rect x="999.6" y="711" width="1.5" height="1.5"/><rect x="1002.2" y="711" width="1.5" height="1.5"/><rect x="994.4" y="713.8" width="1.5" height="1.5"/><rect x="997" y="713.8" width="1.5" height="1.5"/><rect x="999.6" y="713.8" width="1.5" height="1.5"/><rect x="1002.2" y="713.8" width="1.5" height="1.5"/><rect x="994.4" y="716.6" width="1.5" height="1.5"/><rect x="997" y="716.6" width="1.5" height="1.5"/><rect x="999.6" y="716.6" width="1.5" height="1.5"/></g><rect x="997" y="711" width="1.5" height="1.5" fill="#3c87d1"/>
<!-- TTreeView -->
<rect x="993.9" y="728" width="8.1" height="2.4" fill="#3c87d1"/><rect x="996.4" y="731.8" width="8.8" height="2.5" fill="#48b08a"/><path d="M994.6 730.4V733H996.4" stroke="#8e9196" stroke-width="0.7" fill="none"/>
</svg>
</body></html>
